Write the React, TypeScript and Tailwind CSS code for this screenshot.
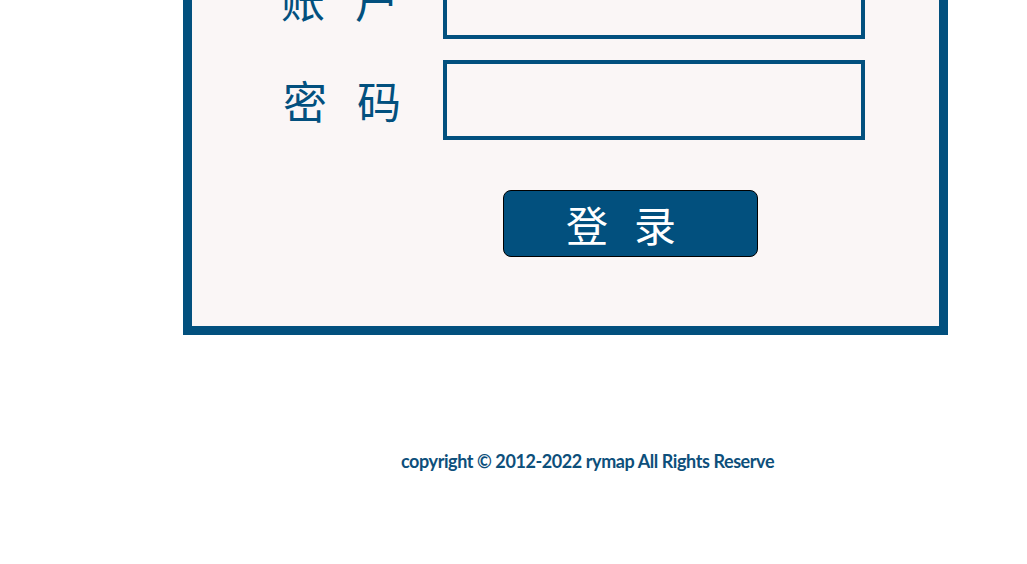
import React from "react";

const blue = "text-[#02507e]";

export default function App() {
  return (
    <div className="w-[1027px] h-[564px] overflow-hidden bg-white" style={{ fontFamily: '"Noto Sans CJK SC", "Noto Sans", sans-serif' }}>
      <div className="mt-[-110px] ml-[183px] w-[765px] border-[9px] border-[#02507e] bg-[#faf6f6] pt-[60px] pb-[69px]">
        <div className="flex flex-col gap-[21px]">
          <div className="flex items-center pl-[89px]">
            <div className={`w-[162px] flex items-center text-[44px] leading-none ${blue}`}>
              <span>账</span>
              <span className="ml-[30px]">户</span>
            </div>
            <div className="w-[422px] h-[80px] border-4 border-[#02507e] bg-[#faf6f6]" />
          </div>
          <div className="flex items-center pl-[91px]">
            <div className={`w-[160px] flex items-center text-[44px] leading-none ${blue}`}>
              <span>密</span>
              <span className="ml-[30px]">码</span>
            </div>
            <div className="w-[422px] h-[80px] border-4 border-[#02507e] bg-[#faf6f6]" />
          </div>
        </div>
        <div className="mt-[50px] ml-[311px] w-[255px] h-[67px] rounded-[8px] border border-black bg-[#02507e] flex items-center pl-[62px] text-white text-[42px] leading-none">
          <span>登</span>
          <span className="ml-[26px]">录</span>
        </div>
      </div>
      <div
        className="mt-[114px] ml-[401px] text-[18px] leading-[24px] font-bold text-[#0d4f7b] whitespace-nowrap tracking-[-0.42px]"
        style={{ fontFamily: 'Lato, "Liberation Sans", sans-serif' }}
      >
        copyright © 2012-2022 rymap All Rights Reserve
      </div>
    </div>
  );
}
